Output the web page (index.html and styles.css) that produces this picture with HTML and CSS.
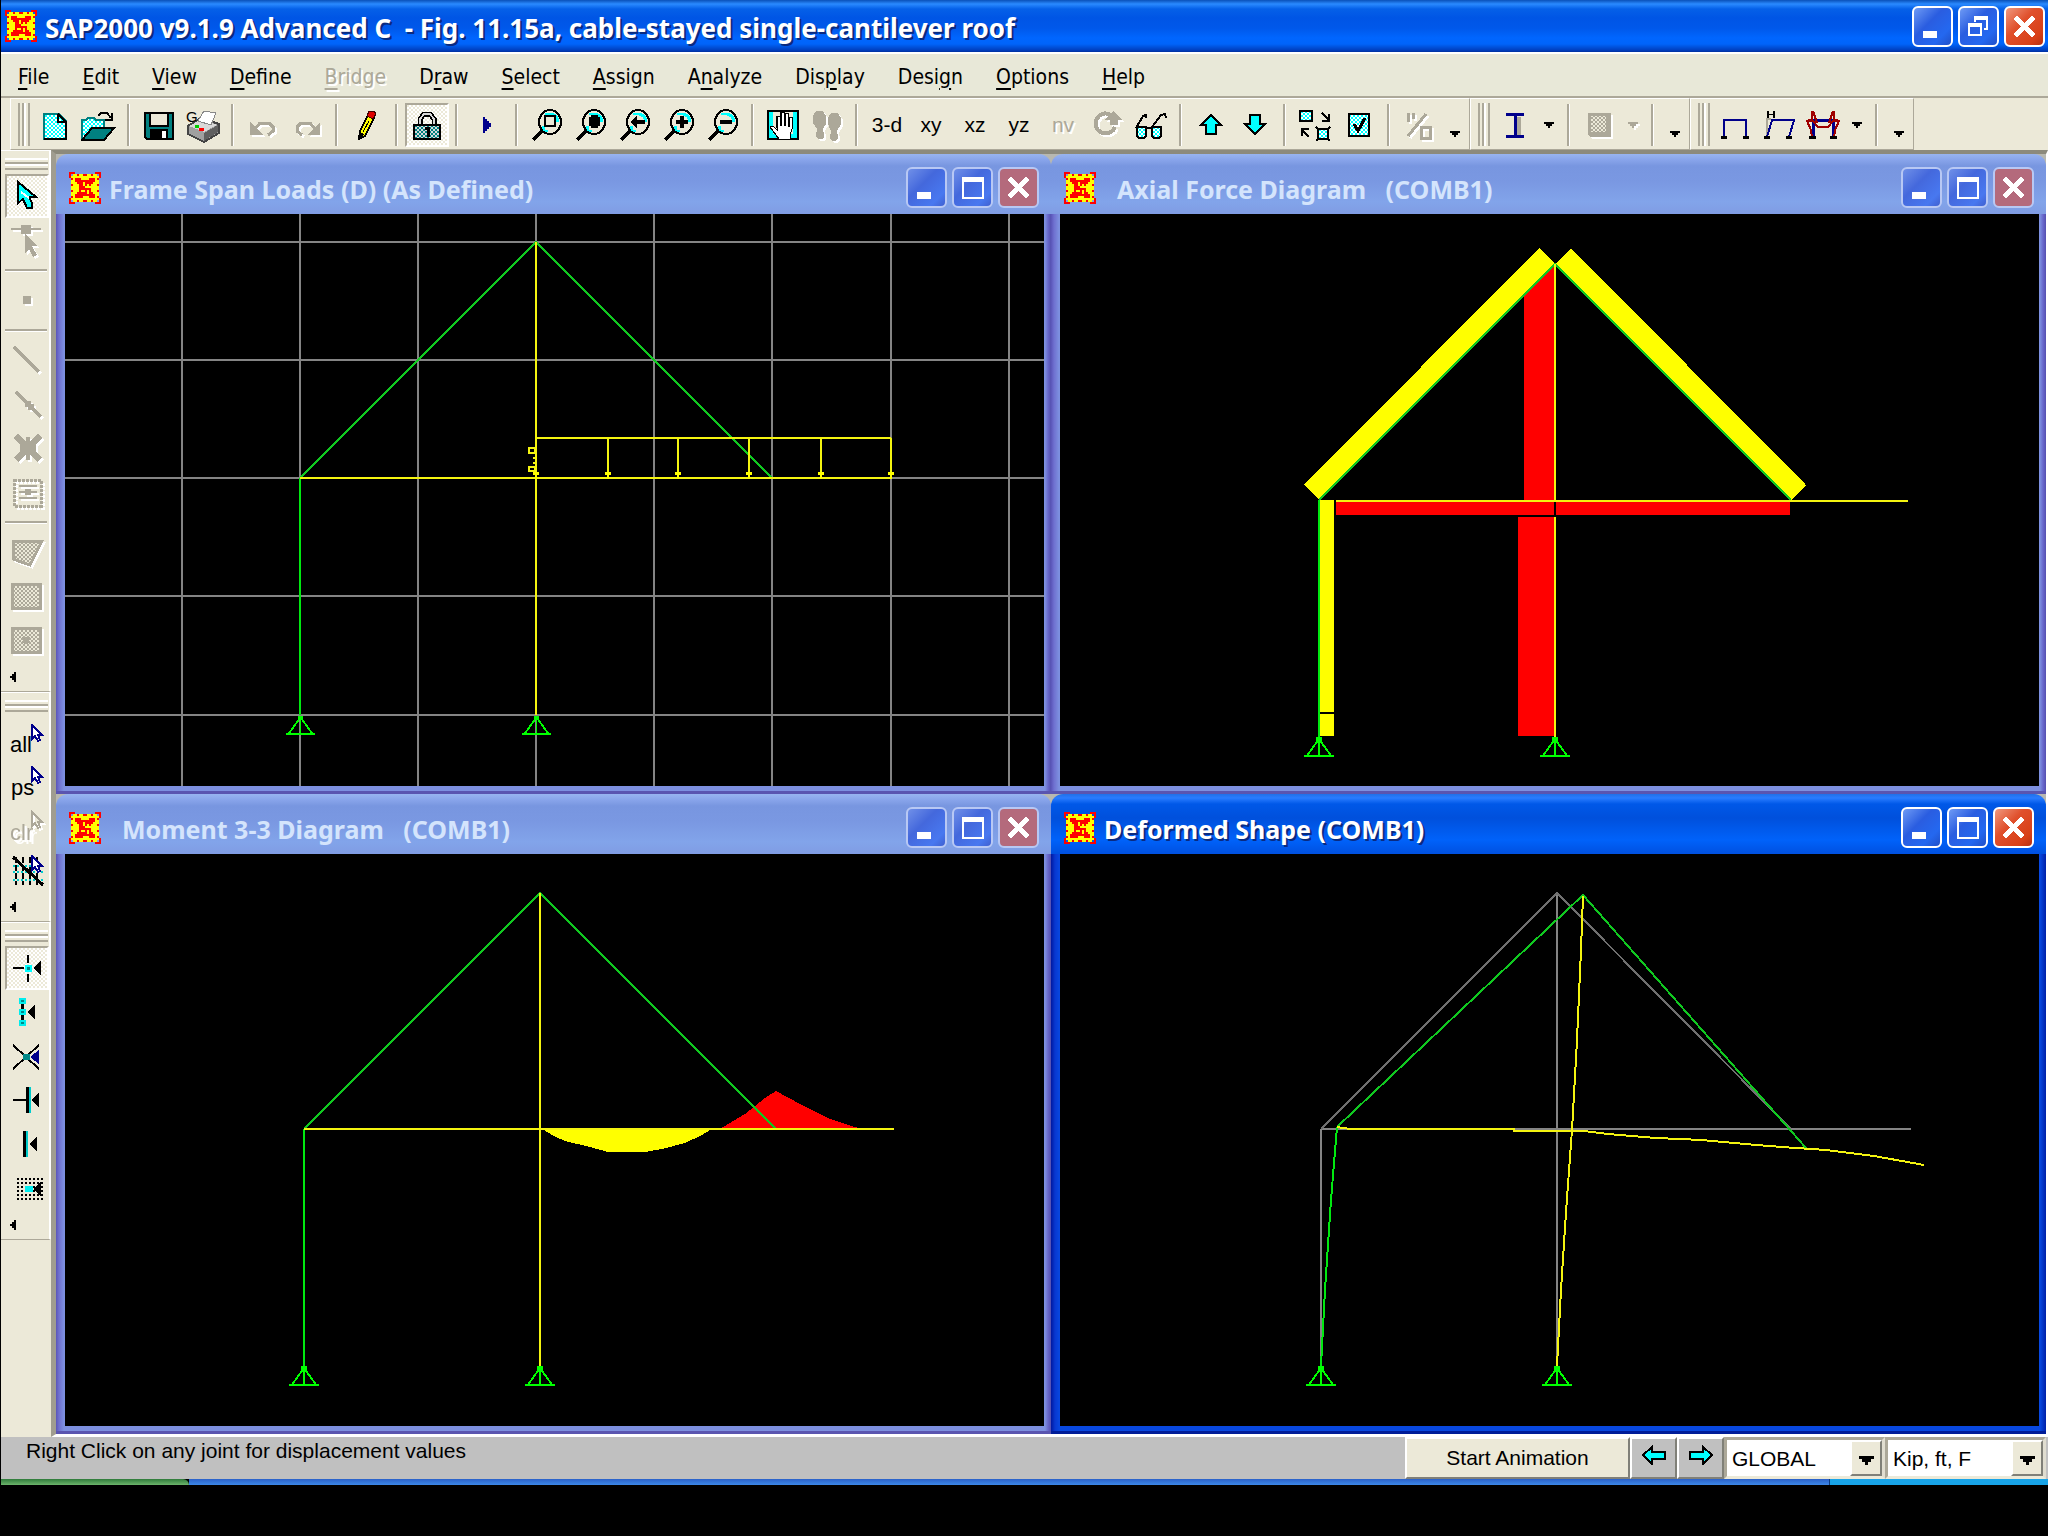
FILE: index.html
```html
<!DOCTYPE html>
<html lang="en">
<head>
    <meta charset="UTF-8">
    <meta name="viewport" content="width=device-width, initial-scale=1.0">
    <title>SAP2000 v9.1.9 Advanced C - Fig. 11.15a, cable-stayed single-cantilever roof</title>
    <link rel="stylesheet" href="styles.css">
</head>
<body>
    <!-- shared symbols -->
    <svg class="defs" width="0" height="0" aria-hidden="true">
        <defs>
            <pattern id="dots-gray" width="4" height="4" patternUnits="userSpaceOnUse">
                <rect width="4" height="4" fill="#ece9d8"/><path d="M0 0h2v2H0zM2 2h2v2H2z" fill="#aca899"/>
            </pattern>
            <pattern id="dots-cyan" width="4" height="4" patternUnits="userSpaceOnUse">
                <rect width="4" height="4" fill="#fff"/><path d="M0 0h2v2H0zM2 2h2v2H2z" fill="#0ff"/>
            </pattern>
            <pattern id="dots-teal" width="4" height="4" patternUnits="userSpaceOnUse">
                <rect width="4" height="4" fill="#d8d8d8"/><path d="M0 0h2v2H0zM2 2h2v2H2z" fill="#008080"/>
            </pattern>
            <pattern id="dots-black" width="4" height="4" patternUnits="userSpaceOnUse">
                <path d="M0 0h2v2H0z" fill="#000"/>
            </pattern>
            <symbol id="logo" viewBox="0 0 16 16">
                <path d="M2 1h12v1h1v12h-1v1H2v-1H1V2h1z" fill="#ff0"/>
                <path d="M0 0h3v1H1v2H0zM13 0h3v3h-1V1h-2zM0 13h1v2h2v1H0zM15 13h1v3h-3v-1h2zM1 3h1v1H1zM14 3h1v1h-1zM1 12h1v1H1zM14 12h1v1h-1zM4 1h1v1H4zM7 1h2v1H7zM11 1h1v1h-1zM4 14h1v1H4zM7 14h2v1H7zM11 14h1v1h-1zM1 6h1v1H1zM1 9h1v1H1zM14 6h1v1h-1zM14 9h1v1h-1z" fill="#f00"/>
                <path d="M3 3h3v1h4V3h3v2h-1v1h-1v4h1v1h1v2h-3v-1H7v1H3v-2h1v-1h1V6H4V5H3z" fill="#f00"/>
                <path d="M7 5h1v2H7zM9 6h1v1H9zM6 9h2v1H6zM9 9h1v2H9zM8 7h3v1H8z" fill="#ff0"/>
            </symbol>
            <symbol id="win-min" viewBox="0 0 40 40"><path d="M10 25h15v7H10z" fill="#fff"/></symbol>
            <symbol id="win-max" viewBox="0 0 40 40"><path d="M9 9h23v23H9zM11 14v16h19V14z" fill="#fff" fill-rule="evenodd"/></symbol>
            <symbol id="win-restore" viewBox="0 0 40 40"><path d="M15 9h15v15h-4v-2h2v-9H17v2h-2zM9 16h15v14H9zM11 20v8h11v-8z" fill="#fff" fill-rule="evenodd"/></symbol>
            <symbol id="win-close" viewBox="0 0 40 40"><path d="M10 10l20 20M30 10L10 30" stroke="#fff" stroke-width="5"/></symbol>
            <symbol id="lens" viewBox="0 0 36 36">
                <ellipse cx="21" cy="15" rx="11" ry="12" fill="#ece9d8" stroke="#000" stroke-width="2"/>
                <path d="M16 6h6v2h-6zM22 6c6 0 8 4 8 9h-3c0-4-2-6-5-6zM13 19h3v4h3v2c-4 0-6-2-6-6z" fill="#0ff"/>
                <path d="M13 24L4 33" stroke="#000" stroke-width="4"/>
            </symbol>
            <symbol id="cursor" viewBox="0 0 14 18"><path d="M2 1v14l3-3 3 5 2-1-2-5h4z" fill="#fff" stroke="#00008b" stroke-width="2"/></symbol>
            <symbol id="support" viewBox="0 0 32 22"><path d="M16 2L3 20h26zM16 2v18M0 20h32" fill="none" stroke="#0f0" stroke-width="2"/><path d="M13 0h6v4h-6z" fill="#0f0"/></symbol>
            <symbol id="caret" viewBox="0 0 12 8"><path d="M1 1h10v2H9v2H7v2H5V5H3V3H1z" fill="currentColor"/></symbol>
            <symbol id="caret-left" viewBox="0 0 8 12"><path d="M7 1v10H5V9H3V7H1V5h2V3h2V1z" fill="#000"/></symbol>
        </defs>
    </svg>

    <div class="app">
        <header class="titlebar">
            <svg class="logo"><use href="#logo"/></svg>
            <h1>SAP2000 v9.1.9 Advanced C &nbsp;- Fig. 11.15a, cable-stayed single-cantilever roof</h1>
            <div class="win-buttons">
                <button aria-label="Minimize"><svg><use href="#win-min"/></svg></button>
                <button aria-label="Restore"><svg><use href="#win-restore"/></svg></button>
                <button class="close" aria-label="Close"><svg><use href="#win-close"/></svg></button>
            </div>
        </header>

        <nav class="menubar">
            <button><u>F</u>ile</button>
            <button><u>E</u>dit</button>
            <button><u>V</u>iew</button>
            <button><u>D</u>efine</button>
            <button disabled><u>B</u>ridge</button>
            <button>D<u>r</u>aw</button>
            <button><u>S</u>elect</button>
            <button><u>A</u>ssign</button>
            <button>A<u>n</u>alyze</button>
            <button>Dis<u>p</u>lay</button>
            <button>Desi<u>g</u>n</button>
            <button><u>O</u>ptions</button>
            <button><u>H</u>elp</button>
        </nav>

        <div class="toolbars">
            <div class="toolbar">
                <span class="grip"></span>
                <button class="tool" aria-label="New"><svg viewBox="0 0 36 36"><path d="M7 7h15l7 7v18H7z" fill="url(#dots-cyan)" stroke="#008080" stroke-width="2"/><path d="M21 7v8h8v17H7M21 7l8 8" fill="none" stroke="#000" stroke-width="2"/></svg></button>
                <button class="tool" aria-label="Open"><svg viewBox="0 0 36 36"><path d="M1 32V13h4l2-2h6l2 2h8v8" fill="url(#dots-cyan)" stroke="#008080" stroke-width="2"/><path d="M1 33l10-12h22L23 33z" fill="#008080" stroke="#000" stroke-width="2"/><path d="M17 9l3-3h6l4 5M31 6v7h-7" fill="none" stroke="#000" stroke-width="2"/></svg></button>
                <i class="sep"></i>
                <button class="tool" aria-label="Save"><svg viewBox="0 0 36 36"><path d="M4 6h28v26H6l-2-2z" fill="#008080" stroke="#000" stroke-width="2"/><path d="M9 6h18v13H9z" fill="#ece9d8" stroke="#000" stroke-width="2"/><path d="M9 22h18v10H9z" fill="#000"/><path d="M21 24h4v7h-4z" fill="#fff"/></svg></button>
                <button class="tool" aria-label="Print"><svg viewBox="0 0 36 36"><path d="M3 19l13-8 18 6v9L19 35 3 27z" fill="#a0a0a0" stroke="#444" stroke-width="2"/><path d="M4 19l13-7 15 6-13 7z" fill="#d8d8d8"/><path d="M13 14l6-10 12 2-5 12z" fill="#fff" stroke="#888" stroke-width="1"/><path d="M19 26v8l14-9v-7z" fill="#606060"/><path d="M10 18h4v3h-4z" fill="#0c0"/><path d="M14 21h5v3h-5z" fill="#f00"/><text x="1" y="15" font-size="15">G</text></svg></button>
                <i class="sep"></i>
                <button class="tool" disabled aria-label="Undo"><svg viewBox="0 0 36 36"><path d="M9 23l6-7h9l4 4v4l-5 4" fill="none" stroke="#aca899" stroke-width="3"/><path d="M5 15v13h13z" fill="#aca899"/></svg></button>
                <button class="tool" disabled aria-label="Redo"><svg viewBox="0 0 36 36"><path d="M27 23l-6-7h-9l-4 4v4l5 4" fill="none" stroke="#aca899" stroke-width="3"/><path d="M31 15v13H18z" fill="#aca899"/></svg></button>
                <i class="sep"></i>
                <button class="tool" aria-label="Refresh"><svg viewBox="0 0 36 36"><path d="M19 8l6 3-9 18-6 3 1-8z" fill="#ff0" stroke="#000" stroke-width="2"/><path d="M10 24l5 3-5 6z" fill="#000"/><path d="M20 4h5l2 3-3 5-6-3z" fill="#e00000" stroke="#400" stroke-width="1"/><path d="M20 14l-6 11" stroke="#000" stroke-width="1"/></svg></button>
                <i class="sep"></i>
                <button class="tool pressed" aria-label="Lock model"><svg viewBox="0 0 36 36"><path d="M11 18v-6l4-5h6l4 5v6" fill="none" stroke="#000" stroke-width="5"/><path d="M11 18v-6l4-5h6l4 5v6" fill="none" stroke="#d8d8d8" stroke-width="2"/><path d="M5 18h26v14H5z" fill="url(#dots-teal)" stroke="#000" stroke-width="2"/><path d="M16 20h5v10h-3v-7h-2z" fill="#000"/></svg></button>
                <i class="sep"></i>
                <button class="tool" aria-label="Run analysis"><svg viewBox="0 0 36 36"><path d="M14 10h2v2h2v2h2v2h2v4h-2v2h-2v2h-2v2h-2z" fill="#00008b"/></svg></button>
                <i class="sep"></i>
                <button class="tool" aria-label="Zoom window"><svg viewBox="0 0 36 36"><use href="#lens"/><path d="M16 9h10v10H16z" fill="#ece9d8" stroke="#000" stroke-width="2"/></svg></button>
                <button class="tool" aria-label="Full view"><svg viewBox="0 0 36 36"><use href="#lens"/><path d="M18 8h7v2h2v9h-2v2h-7v-2h-2v-9h2z" fill="#000"/></svg></button>
                <button class="tool" aria-label="Previous zoom"><svg viewBox="0 0 36 36"><use href="#lens"/><path d="M13 15l7-6v4h8v4h-8v4z" fill="#000"/></svg></button>
                <button class="tool" aria-label="Zoom in"><svg viewBox="0 0 36 36"><use href="#lens"/><path d="M19 9h4v4h4v4h-4v4h-4v-4h-4v-4h4z" fill="#000"/></svg></button>
                <button class="tool" aria-label="Zoom out"><svg viewBox="0 0 36 36"><use href="#lens"/><path d="M15 13h12v4H15z" fill="#000"/></svg></button>
                <i class="sep"></i>
                <button class="tool" aria-label="Pan"><svg viewBox="0 0 36 36"><path d="M3 4h30v28H3z" fill="#0ff" stroke="#000" stroke-width="2"/><path d="M8 5h20v22H8z" fill="#ece9d8"/><path d="M5 20l3-1 4 4V9h3l1-4h3v3l2-2h2v4h4v12l-2 6v4H14l-3-4z" fill="#fff" stroke="#000" stroke-width="1"/><path d="M12 9v12M16 6v13M20 7v12M24 10v10" stroke="#000" stroke-width="2"/></svg></button>
                <button class="tool" disabled aria-label="Walk"><svg viewBox="0 0 36 36"><path d="M7 4h7l3 5v8l-3 5v3h1v5l-2 2H9l-2-3v-4h1v-3l-4-6V9zM22 6h7l3 5v6l-4 7v3h1v4l-2 3h-4l-2-3v-4h1v-3l-3-7v-6z" fill="#aca899"/></svg></button>
                <i class="sep"></i>
                <button class="tool">3-d</button>
                <button class="tool">xy</button>
                <button class="tool">xz</button>
                <button class="tool">yz</button>
                <button class="tool" disabled>nv</button>
                <button class="tool" disabled aria-label="Rotate view"><svg viewBox="0 0 36 36"><path d="M22 8a10 10 0 1 0 4 12" fill="none" stroke="#aca899" stroke-width="4"/><path d="M24 4l9 9h-4v5h-8v-5h-5z" fill="#aca899"/></svg></button>
                <button class="tool" aria-label="Perspective"><svg viewBox="0 0 36 36"><path d="M3 21l7-12 3-1v3M19 20l9-12 4-1 1 4" fill="none" stroke="#000" stroke-width="2"/><path d="M4 20h9v9l-2 2H6l-2-2zM19 20h9v9l-2 2h-5l-2-2z" fill="url(#dots-cyan)" stroke="#000" stroke-width="2"/><path d="M13 21h6" stroke="#000" stroke-width="2"/></svg></button>
                <i class="sep"></i>
                <button class="tool" aria-label="Move up"><svg viewBox="0 0 36 36"><path d="M18 8l10 10h-5v9H13v-9H8z" fill="#0ff" stroke="#000" stroke-width="2"/></svg></button>
                <button class="tool" aria-label="Move down"><svg viewBox="0 0 36 36"><path d="M18 27L8 17h5V8h10v9h5z" fill="#0ff" stroke="#000" stroke-width="2"/></svg></button>
                <i class="sep"></i>
                <button class="tool" aria-label="Shrink objects"><svg viewBox="0 0 36 36"><path d="M3 4h12v10H3zM21 22h10v10H21z" fill="url(#dots-cyan)" stroke="#000" stroke-width="2"/><path d="M25 6l7 7M32 7v7h-7M12 30l-7-7M5 29v-7h7M19 20l3 3M33 20l-3 3M19 34l3-3M33 34l-3-3" fill="none" stroke="#000" stroke-width="2"/></svg></button>
                <button class="tool" aria-label="Display options"><svg viewBox="0 0 36 36"><path d="M8 7h20v22H8z" fill="url(#dots-cyan)" stroke="#000" stroke-width="2"/><path d="M13 17l4 7 7-13" fill="none" stroke="#000" stroke-width="3"/></svg></button>
                <i class="sep"></i>
                <button class="tool" disabled aria-label="Assign to group"><svg viewBox="0 0 36 36"><path d="M7 6v9M12 6v6M25 7L7 29M20 20h9v11h-9z" fill="none" stroke="#aca899" stroke-width="3"/></svg></button>
                <button class="more low" aria-label="More buttons"><svg class="caret"><use href="#caret"/></svg></button>
            </div>
            <div class="toolbar">
                <span class="grip"></span>
                <button class="tool" aria-label="Frame section"><svg viewBox="0 0 36 36"><path d="M20 10h4v18h-4z" fill="#aca899"/><path d="M9 7h18M9 29h18M18 7v22" fill="none" stroke="#00008b" stroke-width="3"/></svg></button>
                <button class="drop" aria-label="Frame section list"><svg class="caret"><use href="#caret"/></svg></button>
                <i class="sep"></i>
                <button class="tool" disabled aria-label="Area section"><svg viewBox="0 0 36 36"><path d="M7 6h23v24H9l-2-2z" fill="#aca899"/><path d="M10 9h15v16H10z" fill="url(#dots-gray)"/></svg></button>
                <button class="drop" disabled aria-label="Area section list"><svg class="caret"><use href="#caret"/></svg></button>
                <i class="sep"></i>
                <button class="more low" aria-label="More buttons"><svg class="caret"><use href="#caret"/></svg></button>
            </div>
            <div class="toolbar">
                <span class="grip"></span>
                <button class="tool" aria-label="Undeformed shape"><svg viewBox="0 0 36 36"><path d="M7 30V13h22v17" fill="none" stroke="#00008b" stroke-width="2"/><path d="M4 29h6v3H4zM26 29h6v3h-6z"/></svg></button>
                <button class="tool" aria-label="Deformed shape"><svg viewBox="0 0 36 36"><path d="M6 30V12h4" fill="none" stroke="#aca899" stroke-width="2"/><path d="M6 30l5-17h22l-5 17" fill="none" stroke="#00008b" stroke-width="2"/><path d="M3 29h6v3H3zM25 29h6v3h-6zM6 4h2v3h4V4h2v7h-2V8H8v3H6z"/></svg></button>
                <button class="tool" aria-label="Forces"><svg viewBox="0 0 36 36"><path d="M8 31V13h20v18" fill="none" stroke="#00008b" stroke-width="3"/><path d="M7 4v8l-5 2 4 9 1 8M29 4v8l5 2-4 9-1 8M2 14h6l5 6h10l5-6h6M8 4l4 12M28 4l-4 12" fill="none" stroke="#a00000" stroke-width="2"/><path d="M4 29h7v3H4zM25 29h7v3h-7z"/></svg></button>
                <button class="drop" aria-label="Forces list"><svg class="caret"><use href="#caret"/></svg></button>
                <i class="sep"></i>
                <button class="more low" aria-label="More buttons"><svg class="caret"><use href="#caret"/></svg></button>
            </div>
        </div>

        <div class="main">
            <aside class="sidebar">
                <div class="sidegroup">
                    <span class="grip"></span>
                    <button class="tool pressed" aria-label="Pointer"><svg viewBox="0 0 36 36"><path d="M9 4v21l5-4 4 9h5v-5l-3-6h7z" fill="#0ff" stroke="#000" stroke-width="2"/><path d="M12 14l8 6" stroke="#fff" stroke-width="2"/></svg></button>
                    <button class="tool" disabled aria-label="Reshape"><svg viewBox="0 0 36 36"><path d="M2 6h30v2H2zM12 3h10v9H12zM16 12l13 12h-6l5 9-4 2-4-8-4 4z" fill="#aca899"/></svg></button>
                    <i class="sep"></i>
                    <button class="tool" disabled aria-label="Draw joint"><svg viewBox="0 0 36 36"><path d="M14 14h8v8h-8z" fill="#aca899"/></svg></button>
                    <i class="sep"></i>
                    <button class="tool" disabled aria-label="Draw frame"><svg viewBox="0 0 36 36"><path d="M5 5l25 25" stroke="#aca899" stroke-width="4"/></svg></button>
                    <button class="tool" disabled aria-label="Quick draw frame"><svg viewBox="0 0 36 36"><path d="M7 6l25 25" stroke="#aca899" stroke-width="4"/><path d="M16 18h3v-3h3v3h3v3h-3v3h-3v-3h-3z" fill="#aca899"/></svg></button>
                    <button class="tool" disabled aria-label="Quick draw braces"><svg viewBox="0 0 36 36"><path d="M7 6l24 24M31 6L7 30" stroke="#aca899" stroke-width="6"/><path d="M17 7h4v6h6v10h-6v7h-4v-7h-6V13h6z" fill="#aca899"/></svg></button>
                    <button class="tool" disabled aria-label="Quick draw beams"><svg viewBox="0 0 36 36"><path d="M5 6h27v26H5z" fill="none" stroke="#aca899" stroke-width="3" stroke-dasharray="3 1"/><path d="M10 12h18M10 18h18M10 24h18" stroke="#aca899" stroke-width="2"/><path d="M16 15h6v6h-6z" fill="#aca899"/></svg></button>
                    <i class="sep"></i>
                    <button class="tool" disabled aria-label="Draw poly area"><svg viewBox="0 0 36 36"><path d="M4 7h29L21 31 4 25z" fill="url(#dots-gray)" stroke="#aca899" stroke-width="3"/></svg></button>
                    <button class="tool" disabled aria-label="Draw rectangular area"><svg viewBox="0 0 36 36"><path d="M3 6h28v24H3z" fill="url(#dots-gray)" stroke="#aca899" stroke-width="3"/></svg></button>
                    <button class="tool" disabled aria-label="Quick draw area"><svg viewBox="0 0 36 36"><path d="M3 6h28v24H3z" fill="url(#dots-gray)" stroke="#aca899" stroke-width="3"/><path d="M14 15l6 6M20 15l-6 6" stroke="#aca899" stroke-width="4"/></svg></button>
                    <button class="sidemore" aria-label="More buttons"><svg class="caret-left"><use href="#caret-left"/></svg></button>
                </div>
                <div class="sidegroup">
                    <span class="grip"></span>
                    <button class="tool" aria-label="Select all"><svg viewBox="0 0 36 36"><text x="1" y="32" font-size="22">all</text><use href="#cursor" x="21" y="4" width="14" height="18"/></svg></button>
                    <button class="tool" aria-label="Previous selection"><svg viewBox="0 0 36 36"><text x="2" y="31" font-size="22">ps</text><use href="#cursor" x="21" y="2" width="14" height="18"/></svg></button>
                    <button class="tool" disabled aria-label="Clear selection"><svg viewBox="0 0 36 36"><text x="1" y="32" font-size="22" fill="#aca899">clr</text><path d="M23 4v14l3-3 3 5 2-1-2-5h4z" fill="none" stroke="#aca899" stroke-width="2"/></svg></button>
                    <button class="tool" aria-label="Intersecting line select"><svg viewBox="0 0 36 36"><path d="M7 5v28M14 5v28M21 5v28M28 5v28" stroke="#000" stroke-width="2" stroke-dasharray="6 2"/><path d="M4 14h30M4 20h30M4 28h30" stroke="#0cc" stroke-width="2" stroke-dasharray="2 2"/><path d="M4 5l30 28" stroke="#000" stroke-width="3"/><use href="#cursor" x="21" y="3" width="14" height="18"/></svg></button>
                    <button class="sidemore" aria-label="More buttons"><svg class="caret-left"><use href="#caret-left"/></svg></button>
                </div>
                <div class="sidegroup">
                    <span class="grip"></span>
                    <button class="tool pressed" aria-label="Snap to joints"><svg viewBox="0 0 36 36"><path d="M4 17h11v2H4zM18 5h2v8h-2zM18 24h2v8h-2zM24 18l8-7v14z"/><path d="M16 15h7v7h-7z" fill="#0ff"/><path d="M18 17h3v3h-3z" fill="#088"/></svg></button>
                    <button class="tool" aria-label="Snap to ends and midpoints"><svg viewBox="0 0 36 36"><path d="M12 8h3v20h-3zM18 18l8-7v14z"/><path d="M10 4h7v6h-7zM10 15h7v6h-7zM10 26h7v6h-7z" fill="#0ee"/><path d="M12 6h3v2h-3zM12 17h3v2h-3zM12 28h3v2h-3z" fill="#088"/></svg></button>
                    <button class="tool" aria-label="Snap to intersections"><svg viewBox="0 0 36 36"><path d="M4 7l26 24M30 7L4 31" stroke="#000" stroke-width="2"/><path d="M14 16h7v6h-7z" fill="#088"/><path d="M21 19l9-7v14z" fill="#00008b"/></svg></button>
                    <button class="tool" aria-label="Snap to perpendicular"><svg viewBox="0 0 36 36"><path d="M4 17h13v2H4zM17 5h3v26h-3zM22 18l8-7v14z"/><path d="M20 5h2v26h-2z" fill="#0cc"/></svg></button>
                    <button class="tool" aria-label="Snap to lines"><svg viewBox="0 0 36 36"><path d="M14 5h3v26h-3zM20 18l8-7v14z"/><path d="M17 5h2v26h-2z" fill="#0cc"/></svg></button>
                    <button class="tool" aria-label="Snap to grid"><svg viewBox="0 0 36 36"><path d="M6 6h28v26H6z" fill="url(#dots-black)"/><path d="M24 19l8-7v14z"/><path d="M16 16h8v6h-8z" fill="#0ee"/></svg></button>
                    <button class="sidemore" aria-label="More buttons"><svg class="caret-left"><use href="#caret-left"/></svg></button>
                </div>
            </aside>

            <main class="mdi">
                <section class="child">
                    <header>
                        <svg class="logo"><use href="#logo"/></svg>
                        <h2>Frame Span Loads (D) (As Defined)</h2>
                        <div class="win-buttons">
                            <button aria-label="Minimize"><svg><use href="#win-min"/></svg></button>
                            <button aria-label="Maximize"><svg><use href="#win-max"/></svg></button>
                            <button class="close" aria-label="Close"><svg><use href="#win-close"/></svg></button>
                        </div>
                    </header>
                    <svg class="canvas" viewBox="65 214 979 572">
                        <path class="grid" d="M182 214v572M300 214v572M418 214v572M536 214v572M654 214v572M772 214v572M891 214v572M1009 214v572M65 242h979M65 360h979M65 478h979M65 596h979M65 715h979"/>
                        <path class="cable" d="M300 478L536 242L772 478"/>
                        <path class="column" d="M300 478V715"/>
                        <path class="beam" d="M300 478H891M536 242V715M536 438H891M608 438V478M678 438V478M749 438V478M821 438V478M891 438V478"/>
                        <path class="load" d="M533 472h6v3h-2v4h-2v-4h-2zM605 472h6v3h-2v4h-2v-4h-2zM675 472h6v3h-2v4h-2v-4h-2zM746 472h6v3h-2v4h-2v-4h-2zM818 472h6v3h-2v4h-2v-4h-2zM888 472h6v3h-2v4h-2v-4h-2z"/>
                        <path class="beam" d="M529 448h6v5h-6zM529 467h6v4h-6zM533 458h3M533 463h3"/>
                        <use href="#support" x="286" y="715" width="29" height="21"/>
                        <use href="#support" x="522" y="715" width="29" height="21"/>
                    </svg>
                </section>

                <section class="child">
                    <header>
                        <svg class="logo"><use href="#logo"/></svg>
                        <h2>&nbsp; Axial Force Diagram &nbsp; (COMB1)</h2>
                        <div class="win-buttons">
                            <button aria-label="Minimize"><svg><use href="#win-min"/></svg></button>
                            <button aria-label="Maximize"><svg><use href="#win-max"/></svg></button>
                            <button class="close" aria-label="Close"><svg><use href="#win-close"/></svg></button>
                        </div>
                    </header>
                    <svg class="canvas" viewBox="1060 214 979 572">
                        <path class="compression" d="M1554 266L1524 296V500H1554zM1336 502H1790V515H1336zM1518 517H1554V736H1518z"/>
                        <path class="tension" d="M1555 264L1539 248L1304 485L1320 500zM1555 264L1571 248L1806 485L1791 500zM1320 500H1334V736H1320z"/>
                        <path class="gap" d="M1319 713H1334M1555 502V517M1336 516H1556"/>
                        <path class="cable" d="M1319 500L1555 264L1791 500"/>
                        <path class="column" d="M1319 500V738"/>
                        <path class="beam" d="M1336 501H1908M1555 264V500M1555 517V738"/>
                        <use href="#support" x="1304" y="737" width="30" height="21"/>
                        <use href="#support" x="1540" y="737" width="30" height="21"/>
                    </svg>
                </section>

                <section class="child">
                    <header>
                        <svg class="logo"><use href="#logo"/></svg>
                        <h2>&nbsp; Moment 3-3 Diagram &nbsp; (COMB1)</h2>
                        <div class="win-buttons">
                            <button aria-label="Minimize"><svg><use href="#win-min"/></svg></button>
                            <button aria-label="Maximize"><svg><use href="#win-max"/></svg></button>
                            <button class="close" aria-label="Close"><svg><use href="#win-close"/></svg></button>
                        </div>
                    </header>
                    <svg class="canvas" viewBox="65 854 979 572">
                        <path class="tension" d="M542 1129L554 1136L565 1141L590 1147L608 1152H645L662 1149L685 1143L700 1136L712 1129z"/>
                        <path class="compression" d="M720 1129L745 1114L765 1098L776 1091L800 1104L828 1118L845 1124L862 1129z"/>
                        <path class="cable" d="M304 1129L540 893L776 1129"/>
                        <path class="column" d="M304 1129V1366"/>
                        <path class="beam" d="M304 1129H894M540 893V1366"/>
                        <use href="#support" x="289" y="1366" width="30" height="21"/>
                        <use href="#support" x="525" y="1366" width="30" height="21"/>
                    </svg>
                </section>

                <section class="child active">
                    <header>
                        <svg class="logo"><use href="#logo"/></svg>
                        <h2>Deformed Shape (COMB1)</h2>
                        <div class="win-buttons">
                            <button aria-label="Minimize"><svg><use href="#win-min"/></svg></button>
                            <button aria-label="Maximize"><svg><use href="#win-max"/></svg></button>
                            <button class="close" aria-label="Close"><svg><use href="#win-close"/></svg></button>
                        </div>
                    </header>
                    <svg class="canvas" viewBox="1060 854 979 572">
                        <path class="grid" d="M1321 1129V1366M1557 893V1366M1321 1129H1911"/>
                        <path class="grid slope" d="M1321 1129L1557 893L1791 1129"/>
                        <path class="cable" d="M1337 1127L1583 895L1806 1148"/>
                        <path class="column" d="M1321 1366L1325 1290L1331 1200L1337 1127"/>
                        <path class="beam" d="M1337 1127L1350 1129H1514V1131H1584L1608 1134L1656 1138L1702 1140L1756 1145L1796 1148L1826 1150L1850 1153L1874 1156L1924 1165"/>
                        <path class="beam" d="M1557 1366L1561 1290L1566 1212L1572 1130L1577 1040L1581 950L1583 896"/>
                        <use href="#support" x="1306" y="1366" width="30" height="21"/>
                        <use href="#support" x="1542" y="1366" width="30" height="21"/>
                    </svg>
                </section>
            </main>
        </div>

        <footer class="statusbar">
            <p>Right Click on any joint for displacement values</p>
            <button class="start">Start Animation</button>
            <button class="arrow" aria-label="Previous"><svg viewBox="0 0 26 20"><path d="M11 2v5h13v7H11v5L2 10z" fill="#0ff" stroke="#000" stroke-width="2"/></svg></button>
            <button class="arrow" aria-label="Next"><svg viewBox="0 0 26 20"><path d="M15 2v5H2v7h13v5l9-9z" fill="#0ff" stroke="#000" stroke-width="2"/></svg></button>
            <label class="combo">
                <select aria-label="Coordinate system"><option>GLOBAL</option></select>
                <span><svg class="caret"><use href="#caret"/></svg></span>
            </label>
            <label class="combo">
                <select aria-label="Units"><option>Kip, ft, F</option></select>
                <span><svg class="caret"><use href="#caret"/></svg></span>
            </label>
        </footer>
        <div class="taskbar"><i class="start-edge"></i><i class="tasks-edge"></i><i class="tray-edge"></i></div>
    </div>
</body>
</html>
```
FILE: styles.css
```css
* {
    box-sizing: border-box;
}
body {
    margin: 0;
    background: #000;
    font-family: "Liberation Sans", Arial, sans-serif;
    font-size: 21px;
    color: #000;
}
button, select {
    font: inherit;
    color: inherit;
    border: 0;
    padding: 0;
    margin: 0;
    background: none;
}
h1, h2, p {
    margin: 0;
}
svg {
    display: block;
    shape-rendering: crispEdges;
}
.defs {
    position: absolute;
}
.app {
    height: 100vh;
    padding: 0 0 51px 1px;
    display: flex;
    flex-direction: column;
}

/* title bars */
.titlebar {
    height: 52px;
    padding: 0 3px 0 4px;
    display: flex;
    align-items: center;
    gap: 8px;
    background: linear-gradient(#0a50b8 0, #2a8aff 4px, #0560e8 9px, #0055e5 18px, #0058ea 28px, #0066ff 38px, #0064fa 44px, #0040c0 50px, #0030a0);
}
.logo {
    width: 32px;
    height: 32px;
    flex: none;
}
h1, h2 {
    flex: 1;
    padding-top: 3px;
    font-family: "Noto Sans", sans-serif;
    font-size: 26px;
    font-weight: bold;
    line-height: 36px;
    color: #fff;
    white-space: nowrap;
}
h1 {
    text-shadow: 2px 2px 0 #0a2a80;
}
.win-buttons {
    display: flex;
    gap: 5px;
}
.win-buttons button {
    width: 41px;
    height: 41px;
    border: 2px solid #fff;
    border-radius: 6px;
    background: linear-gradient(135deg, #6f9bf5, #2a5de0 40%, #2468f0 75%, #2050c8);
}
.win-buttons svg {
    width: 37px;
    height: 37px;
}
.win-buttons .close {
    background: linear-gradient(135deg, #f09a80, #e0502c 40%, #d84018 80%, #b83010);
}

/* menu */
.menubar {
    height: 46px;
    padding-top: 3px;
    display: flex;
    align-items: center;
    background: #e8e8d8;
    border-top: 2px solid #fff;
    border-bottom: 2px solid #aca899;
    font-family: "DejaVu Sans Condensed", "DejaVu Sans", sans-serif;
}
.menubar button {
    padding: 0 16px 0 17px;
    line-height: 32px;
}
.menubar u {
    text-underline-offset: 4px;
    text-decoration-thickness: 2px;
}
button:disabled {
    color: #aca899;
    text-shadow: 2px 2px 0 #fff;
}
button:disabled svg {
    filter: drop-shadow(2px 2px 0 #fff);
}

/* toolbars */
.toolbars {
    height: 52px;
    padding-left: 9px;
    display: flex;
    background: #ece9d8;
}
.toolbar {
    display: flex;
    align-items: center;
    padding: 1px 0 0 7px;
    border: 1px solid #fff;
    border-right-color: #aca899;
    border-bottom-color: #aca899;
}
.grip {
    width: 12px;
    height: 43px;
    margin-right: 3px;
    border: solid;
    border-width: 0 2px;
    border-color: #fff #aca899;
    background: linear-gradient(90deg, transparent 2px, #aca899 2px 4px, #fff 4px 6px, transparent 6px);
}
.tool {
    width: 44px;
    height: 44px;
    flex: none;
    display: flex;
    align-items: center;
    justify-content: center;
}
.tool svg {
    width: 36px;
    height: 36px;
}
.tool.pressed {
    background: repeating-conic-gradient(#fff 0 25%, #ece9d8 0 50%) 0 0 / 4px 4px;
    border: 2px solid #aca899;
    border-right-color: #fff;
    border-bottom-color: #fff;
}
.sep {
    flex: none;
    width: 16px;
    height: 42px;
    background: linear-gradient(90deg, transparent 6px, #aca899 6px 8px, #fff 8px 9px, transparent 9px);
}
.caret {
    width: 12px;
    height: 8px;
    margin: 0 auto;
}
.drop {
    width: 24px;
    height: 44px;
}
.more {
    width: 28px;
    height: 44px;
}
.low {
    padding-top: 18px;
}

/* workspace */
.main {
    flex: 1;
    min-height: 0;
    display: flex;
    background: #ece9d8;
}
.sidebar {
    width: 50px;
}
.sidegroup {
    padding: 7px 2px 0 4px;
    border-top: 1px solid #fff;
    border-right: 2px solid #fff;
    border-bottom: 1px solid #aca899;
}
.sidegroup .grip {
    display: block;
    width: 43px;
    height: 12px;
    margin: 0 0 4px;
    border-width: 2px 0;
    border-color: #fff #aca899 #aca899;
    background: linear-gradient(transparent 2px, #aca899 2px 4px, #fff 4px 6px, transparent 6px);
}
.sidegroup .sep {
    display: block;
    width: 42px;
    height: 16px;
    background: linear-gradient(transparent 7px, #aca899 7px 9px, #fff 9px 10px, transparent 10px);
}
.sidemore {
    display: block;
    width: 44px;
    height: 29px;
    padding-left: 4px;
}
.caret-left {
    width: 8px;
    height: 12px;
}
.mdi {
    flex: 1;
    display: grid;
    grid-template-columns: 1fr 1fr;
    grid-template-rows: 1fr 1fr;
    border: solid;
    border-width: 4px 2px 3px 5px;
    border-color: #8c8a7c #fff #fff #a09d90;
    background: #b8b8b0;
}
.child {
    display: flex;
    flex-direction: column;
    min-width: 0;
    min-height: 0;
    padding: 0 7px 8px 9px;
    border-radius: 12px 12px 0 0;
    background: linear-gradient(#98b4f0 0, #88a4ea 6px, #7896e0 12px, #7a98e2 28px, #82a4ea 48px, #809ce4 60px, transparent 60px), linear-gradient(90deg, #5a55b8 0, #6f70d0 3px, #7d90e0 8px, #7d90e0 calc(100% - 6px), #6868cc calc(100% - 3px), #5550b0);
    box-shadow: inset 0 -3px 0 #5a55b0;
}
.child > header {
    height: 60px;
    flex: none;
    padding: 7px 5px 0 4px;
    display: flex;
    align-items: center;
    gap: 8px;
}
.child h2 {
    font-size: 25px;
    color: #d4e4fc;
}
.child .win-buttons button {
    border-color: #b8c8f4;
    background: linear-gradient(135deg, #7090e8, #4468dc 40%, #4878f0 80%, #4060d0);
}
.child .win-buttons .close {
    background: #b46a7c;
}
.child.active {
    background: linear-gradient(#2070e8 0, #2a7cff 4px, #0058e8 10px, #0050dc 24px, #0062fa 46px, #0050e0 60px, transparent 60px), linear-gradient(90deg, #0018a0 0, #0838d0 4px, #0848e0 9px, #0848e0 calc(100% - 6px), #0020a8);
    box-shadow: inset 0 -3px 0 #001c98;
}
.child.active h2 {
    color: #fff;
    text-shadow: 2px 2px 0 #0a2a80;
}
.child.active .win-buttons button {
    border-color: #fff;
    background: linear-gradient(135deg, #6f9bf5, #2a5de0 40%, #2468f0 75%, #2050c8);
}
.child.active .win-buttons .close {
    background: linear-gradient(135deg, #f09a80, #e0502c 40%, #d84018 80%, #b83010);
}

/* model views */
.canvas {
    flex: 1;
    min-height: 0;
    width: 100%;
    background: #000;
}
.canvas path {
    fill: none;
    stroke-width: 2;
}
.canvas .grid {
    stroke: #848484;
}
.canvas .slope {
    stroke: #707070;
}
.canvas .cable {
    stroke: #10c820;
}
.canvas .column {
    stroke: #00e810;
}
.canvas .beam {
    stroke: #f4f410;
}
.canvas .load, .canvas .tension {
    fill: #ff0;
}
.canvas .compression {
    fill: #f00;
}
.canvas .gap {
    stroke: #000;
}

/* status bar */
.statusbar {
    height: 42px;
    padding-right: 2px;
    display: flex;
    background: #c0c0c0;
}
.statusbar p {
    flex: 1;
    padding-left: 25px;
    line-height: 28px;
}
.start, .arrow {
    border: 2px solid #fff;
    border-right-color: #808078;
    border-bottom-color: #808078;
}
.start {
    width: 225px;
    background: #ece9d8;
}
.arrow {
    width: 47px;
}
.arrow svg {
    width: 26px;
    height: 20px;
    margin: 0 auto 6px;
}
.combo {
    width: 161px;
    display: flex;
    background: #fff;
    border: 3px solid #aca899;
    border-right-color: #e0ddd0;
    border-bottom-color: #ece9d8;
}
.combo select {
    flex: 1;
    min-width: 0;
    padding-left: 5px;
    appearance: none;
    border-radius: 0;
}
.combo span {
    width: 32px;
    padding-top: 12px;
    background: #ece9d8;
    border: 2px solid #fff;
    border-right-color: #808078;
    border-bottom-color: #808078;
}
.combo .caret {
    width: 18px;
    height: 12px;
}

/* top edge of the system taskbar */
.taskbar {
    height: 6px;
    display: flex;
}
.start-edge {
    width: 188px;
    background: linear-gradient(#2f7a3a, #6cb46c);
    border-radius: 0 6px 0 0;
}
.tasks-edge {
    flex: 1;
    background: linear-gradient(#2a60c8, #3c88e8);
}
.tray-edge {
    width: 219px;
    background: #18a4e8;
    border-left: 1px solid #0a3a80;
}
```
